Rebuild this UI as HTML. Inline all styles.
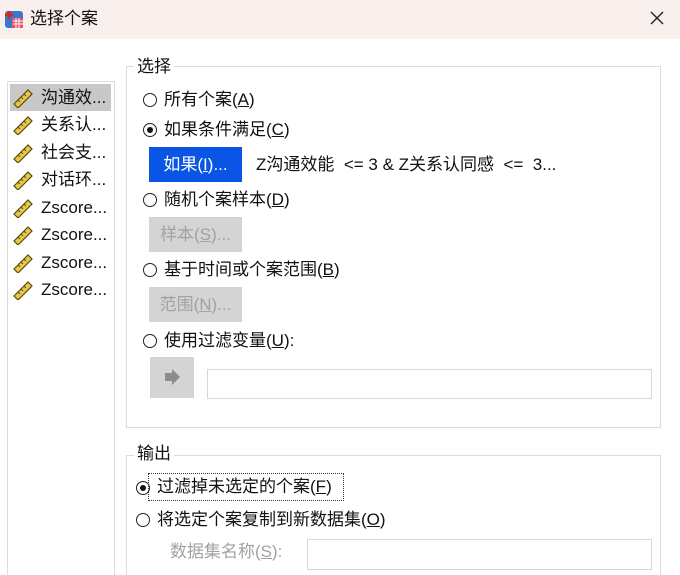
<!DOCTYPE html>
<html style="width:680px;height:575px;overflow:hidden"><head><meta charset="utf-8"><style>
*{margin:0;padding:0;box-sizing:border-box}
body{width:680px;height:575px;background:#fff;position:relative;overflow:hidden;font-family:"Liberation Sans","Noto Sans CJK SC",sans-serif;font-size:17px;color:#111}
.a{position:absolute;white-space:nowrap}
.t{line-height:20px}
.rad{position:absolute;width:14px;height:14px;border:1.5px solid #222;border-radius:50%}
.rad.on::after{content:"";position:absolute;left:2.5px;top:2.5px;width:6px;height:6px;border-radius:50%;background:#111}
.btn{position:absolute;background:#d4d4d4;color:#a2a2a2;text-align:center;line-height:35px;height:35px;width:93px}
.grp{position:absolute;border:1px solid #dcdcdc}
.leg{position:absolute;background:#fff;padding:0 3px;line-height:20px}
u{text-decoration:underline}
</style></head><body>
<div class="a" style="left:0;top:0;width:680px;height:39px;background:#f9efec"></div>
<svg class="a" style="left:3px;top:8px" width="22" height="22" viewBox="0 0 22 22"><rect x="2" y="3" width="18" height="17" rx="3" fill="#3a78c8"/><rect x="9" y="10" width="11" height="10" fill="#e8506a"/><path d="M10 13h10M10 16h10M13 10v10M16 10v10" stroke="#fff" stroke-width="1"/><path d="M2 7h8M6 3v8" stroke="#e02020" stroke-width="2.5"/></svg>
<div class="a t" style="left:30px;top:9px">选择个案</div>
<svg class="a" style="left:649px;top:10px" width="16" height="16"><path d="M2 2L14 14M14 2L2 14" stroke="#222" stroke-width="1.4"/></svg>

<div class="a" style="left:7px;top:81px;width:108px;height:500px;border:1px solid #dcdcdc"></div>
<div class="a" style="left:10px;top:84px;width:101px;height:27px;background:#c8c8c8"></div>

<div class="grp" style="left:126px;top:66px;width:535px;height:362px"></div>
<div class="leg" style="left:134px;top:57px">选择</div>
<div class="rad" style="left:143px;top:93px"></div><div class="a t" style="left:164px;top:90px">所有个案(<u>A</u>)</div>
<div class="rad on" style="left:143px;top:123px"></div><div class="a t" style="left:164px;top:120px">如果条件满足(<u>C</u>)</div>
<div class="btn" style="left:149px;top:147px;background:#0a55e6;color:#fff">如果(<u>I</u>)...</div>
<div class="a t" style="left:256px;top:155px">Z沟通效能 &nbsp;&lt;= 3 &amp; Z关系认同感 &nbsp;&lt;= &nbsp;3...</div>
<div class="rad" style="left:143px;top:193px"></div><div class="a t" style="left:164px;top:190px">随机个案样本(<u>D</u>)</div>
<div class="btn" style="left:149px;top:217px">样本(<u>S</u>)...</div>
<div class="rad" style="left:143px;top:263px"></div><div class="a t" style="left:164px;top:260px">基于时间或个案范围(<u>B</u>)</div>
<div class="btn" style="left:149px;top:287px">范围(<u>N</u>)...</div>
<div class="rad" style="left:143px;top:334px"></div><div class="a t" style="left:164px;top:331px">使用过滤变量(<u>U</u>):</div>
<div class="a" style="left:150px;top:357px;width:44px;height:41px;background:#d4d4d4"></div>
<svg class="a" style="left:162px;top:367px" width="20" height="20"><path d="M3 6h7v-4l8 8-8 8v-4H3z" fill="#8c8c8c"/></svg>
<div class="a" style="left:207px;top:369px;width:445px;height:30px;border:1px solid #d8d8d8"></div>

<div class="grp" style="left:126px;top:455px;width:535px;height:140px"></div>
<div class="leg" style="left:134px;top:444px">输出</div>
<div class="rad on" style="left:136px;top:481px"></div>
<div class="a" style="left:148px;top:473px;width:196px;height:28px;border:1px dotted #333"></div>
<div class="a t" style="left:157px;top:477px">过滤掉未选定的个案(<u>F</u>)</div>
<div class="rad" style="left:136px;top:513px"></div><div class="a t" style="left:157px;top:510px">将选定个案复制到新数据集(<u>O</u>)</div>
<div class="a t" style="left:170px;top:542px;color:#a2a2a2">数据集名称(<u>S</u>):</div>
<div class="a" style="left:307px;top:539px;width:345px;height:31px;border:1px solid #d8d8d8"></div>

<div class="a" style="left:0;top:0;width:120px;height:575px">
 <div class="a" style="left:12px;top:88px"><svg width="22" height="20"><path d="M2 16L16 2l4 4L6 20z" fill="#e8c84a" stroke="#5a4a10" stroke-width="1.2"/><path d="M6 12l2 2M9 9l2 2M12 6l2 2" stroke="#5a4a10"/></svg></div>
 <div class="a t" style="left:41px;top:88px">沟通效...</div>
 <div class="a" style="left:12px;top:115px"><svg width="22" height="20"><path d="M2 16L16 2l4 4L6 20z" fill="#e8c84a" stroke="#5a4a10" stroke-width="1.2"/><path d="M6 12l2 2M9 9l2 2M12 6l2 2" stroke="#5a4a10"/></svg></div>
 <div class="a t" style="left:41px;top:115px">关系认...</div>
 <div class="a" style="left:12px;top:143px"><svg width="22" height="20"><path d="M2 16L16 2l4 4L6 20z" fill="#e8c84a" stroke="#5a4a10" stroke-width="1.2"/><path d="M6 12l2 2M9 9l2 2M12 6l2 2" stroke="#5a4a10"/></svg></div>
 <div class="a t" style="left:41px;top:143px">社会支...</div>
 <div class="a" style="left:12px;top:170px"><svg width="22" height="20"><path d="M2 16L16 2l4 4L6 20z" fill="#e8c84a" stroke="#5a4a10" stroke-width="1.2"/><path d="M6 12l2 2M9 9l2 2M12 6l2 2" stroke="#5a4a10"/></svg></div>
 <div class="a t" style="left:41px;top:170px">对话环...</div>
 <div class="a" style="left:12px;top:198px"><svg width="22" height="20"><path d="M2 16L16 2l4 4L6 20z" fill="#e8c84a" stroke="#5a4a10" stroke-width="1.2"/><path d="M6 12l2 2M9 9l2 2M12 6l2 2" stroke="#5a4a10"/></svg></div>
 <div class="a t" style="left:41px;top:198px">Zscore...</div>
 <div class="a" style="left:12px;top:225px"><svg width="22" height="20"><path d="M2 16L16 2l4 4L6 20z" fill="#e8c84a" stroke="#5a4a10" stroke-width="1.2"/><path d="M6 12l2 2M9 9l2 2M12 6l2 2" stroke="#5a4a10"/></svg></div>
 <div class="a t" style="left:41px;top:225px">Zscore...</div>
 <div class="a" style="left:12px;top:253px"><svg width="22" height="20"><path d="M2 16L16 2l4 4L6 20z" fill="#e8c84a" stroke="#5a4a10" stroke-width="1.2"/><path d="M6 12l2 2M9 9l2 2M12 6l2 2" stroke="#5a4a10"/></svg></div>
 <div class="a t" style="left:41px;top:253px">Zscore...</div>
 <div class="a" style="left:12px;top:280px"><svg width="22" height="20"><path d="M2 16L16 2l4 4L6 20z" fill="#e8c84a" stroke="#5a4a10" stroke-width="1.2"/><path d="M6 12l2 2M9 9l2 2M12 6l2 2" stroke="#5a4a10"/></svg></div>
 <div class="a t" style="left:41px;top:280px">Zscore...</div>
</div>
</body></html>
